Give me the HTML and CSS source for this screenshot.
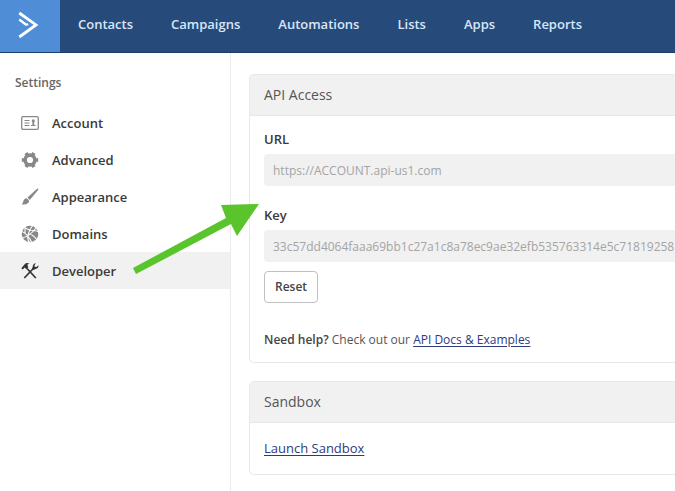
FILE: index.html
```html
<!DOCTYPE html>
<html lang="en">
<head>
<meta charset="utf-8">
<title>Developer Settings</title>
<link rel="stylesheet" href="styles.css">
</head>
<body>
<header class="topbar">
  <a class="logo" href="#" aria-label="Home">
    <svg width="60" height="52" viewBox="0 0 60 52" fill="none" stroke="#fff">
      <path d="M19.3 13L36 24.900L19.300 37" stroke-width="2.800"/>
      <path d="M19.300 19.500L25.500 24.200Q26.700 25 28 24" stroke-width="2.300"/>
    </svg>
  </a>
  <nav class="nav">
    <a href="#">Contacts</a>
    <a href="#">Campaigns</a>
    <a href="#">Automations</a>
    <a href="#">Lists</a>
    <a href="#">Apps</a>
    <a href="#">Reports</a>
  </nav>
</header>
<div class="layout">
  <aside class="sidebar">
    <h2 class="sidebar-title">Settings</h2>
    <nav class="menu">
      <a href="#">
        <svg class="icon" viewBox="0 0 18 18" fill="none" stroke="currentColor">
          <rect x="0.700" y="2.700" width="16.600" height="12.600" rx="1.300" stroke-width="1.300"/>
          <path d="M3.500 6.500h5M3.500 9h5M3.500 11.500h5"/>
          <circle cx="12.300" cy="6.700" r="1.500" fill="currentColor" stroke="none"/>
          <path d="M12.300 7v4" stroke-width="1.800"/>
          <path d="M10 11.500h4.600"/>
        </svg>
        Account
      </a>
      <a href="#">
        <svg class="icon" viewBox="0 0 18 18" fill="none" stroke="currentColor">
          <circle cx="9" cy="9" r="4.900" stroke-width="3.600"/>
          <path d="M5 2l1.200 2.100M13 2l-1.200 2.100M5 16l1.200-2.100M13 16l-1.200-2.100M0.800 9h2.400M14.800 9h2.400" stroke-width="3.600"/>
        </svg>
        Advanced
      </a>
      <a href="#">
        <svg class="icon" viewBox="0 0 18 18" fill="currentColor">
          <path d="M17.300 0.700Q16.500 0.400 15.500 1.200L6.500 9.600L8.700 12L16.700 2.500Q17.600 1.300 17.300 0.700Z"/>
          <path d="M5.700 10.200Q3.400 10.200 2.600 12.500Q2.100 14.800 0.600 16.500Q5.300 17 7.400 14.700Q8.300 13.700 8 12.600Z"/>
        </svg>
        Appearance
      </a>
      <a href="#">
        <svg class="icon" viewBox="0 0 18 18">
          <circle cx="9" cy="9" r="8.300" fill="currentColor"/>
          <path d="M3 1.500Q6 5 12 5.500T18 8M12 0Q8 5 7 10T9 18M0 6Q7 9 11 18M1 13Q8 12 15 3M7 9Q12 9 16 15M4 1L4 8" fill="none" stroke="#fff" stroke-width="1.100"/>
        </svg>
        Domains
      </a>
      <a class="active" href="#" aria-current="page">
        <svg class="icon" viewBox="0 0 18 18" fill="none" stroke="currentColor">
          <path d="M6 6.500L14.800 16" stroke-width="1.700"/>
          <path d="M12.300 6.500L3.300 16" stroke-width="1.700"/>
          <path d="M0.300 6.200L2 4.300L4.300 1.500Q6 0.700 8.400 1.600L6.300 2.700L7.300 5.300L5.300 7.200L3.700 5.600L1.800 7.500Z" fill="currentColor" stroke="none"/>
          <path d="M14.800 1.300Q11.800 1.700 11.800 4.600L11 6.500L12.600 8L14.500 7Q17.600 6.700 17.500 3.300L15.500 5.100L13.700 4.800L13.500 3.200Z" fill="currentColor" stroke="none"/>
        </svg>
        Developer
      </a>
    </nav>
  </aside>
  <main class="content">
    <section class="card">
      <h2 class="card-title">API Access</h2>
      <div class="card-body">
        <label for="url">URL</label>
        <input id="url" type="text" readonly value="https://ACCOUNT.api-us1.com">
        <label class="key-label" for="key">Key</label>
        <input id="key" type="text" readonly value="33c57dd4064faaa69bb1c27a1c8a78ec9ae32efb535763314e5c71819258">
        <button type="button">Reset</button>
        <p class="help"><strong>Need help?</strong> Check out our <a href="#">API Docs &amp; Examples</a></p>
      </div>
    </section>
    <section class="card">
      <h2 class="card-title">Sandbox</h2>
      <div class="card-body sandbox">
        <a href="#">Launch Sandbox</a>
      </div>
    </section>
  </main>
</div>
<svg class="pointer" width="128" height="72" viewBox="0 0 128 72" aria-hidden="true">
  <path d="M1 65L94 15L89 2L127 1L105 33L99 21L4 71Z" fill="#59c42b"/>
</svg>
</body>
</html>
```
FILE: styles.css
```css
* {
  box-sizing: border-box;
}

body {
  display: flex;
  flex-direction: column;
  min-height: 100vh;
  margin: 0;
  background: #fff;
  color: #444;
  font-family: "Open Sans", sans-serif;
  font-size: 13px;
  line-height: 20px;
  overflow-x: hidden;
}

h2,
p {
  margin: 0;
}

.topbar {
  display: flex;
  height: 53px;
  background: #264b7b;
  border-bottom: 1px solid #1d3d69;
}

.logo {
  width: 60px;
  background: #508dd7;
}

.logo svg {
  display: block;
}

.nav {
  display: flex;
  align-items: center;
  gap: 38px;
  padding: 0 18px 4px;
}

.nav a {
  color: #d9e6f7;
  font-weight: 600;
  text-decoration: none;
}

.layout {
  display: flex;
  flex: 1;
}

.sidebar {
  flex: none;
  width: 231px;
  padding-top: 20px;
  border-right: 1px solid #ececec;
}

.sidebar-title {
  padding-left: 15px;
  color: #666;
  font-size: 12px;
  font-weight: 600;
}

.menu {
  display: flex;
  flex-direction: column;
  margin-top: 11px;
}

.menu a {
  display: flex;
  align-items: center;
  gap: 13px;
  height: 37px;
  padding-left: 21px;
  color: #3a3a3a;
  font-weight: 600;
  text-decoration: none;
}

.menu .active {
  background: #f1f1f1;
}

.icon {
  width: 18px;
  height: 18px;
  color: #888;
}

.active .icon {
  color: #333;
}

.content {
  display: flex;
  flex: 1;
  flex-direction: column;
  gap: 18px;
  min-width: 0;
  padding: 21px 0 14px 18px;
}

.card {
  border: 1px solid #e8e8e8;
  border-right: 0;
  border-radius: 5px 0 0 5px;
}

.card-title {
  padding: 10px 14px;
  background: #f1f1f1;
  border-bottom: 1px solid #e8e8e8;
  border-radius: 4px 0 0;
  color: #555;
  font-size: 14px;
  font-weight: 400;
}

.card-body {
  padding: 13px 0 12px 14px;
}

.card-body label {
  display: block;
  margin-bottom: 5px;
  color: #3a3a3a;
  font-weight: 600;
}

.card-body .key-label {
  margin-top: 19px;
}

.card-body input {
  display: block;
  width: 100%;
  height: 32px;
  padding: 0 0 0 9px;
  background: #f1f1f1;
  border: 0;
  border-radius: 4px 0 0 4px;
  color: #a4a4a4;
  font: inherit;
  font-size: 12px;
}

.card-body button {
  display: block;
  height: 32px;
  margin-top: 9px;
  padding: 0 10px;
  background: #fff;
  border: 1px solid #c0c0c0;
  border-radius: 4px;
  color: #444;
  font: inherit;
  font-size: 12px;
  font-weight: 600;
}

.card-body a {
  color: #2c3b80;
  text-underline-offset: 2px;
}

.help {
  margin-top: 27px;
  font-size: 12px;
  color: #555;
}

.help strong {
  color: #444;
  font-weight: 600;
}

.card-body.sandbox {
  padding: 15px 14px 16px;
}

/* Callout arrow laid over the page, pointing at the API credentials. */
.pointer {
  position: absolute;
  top: 203px;
  left: 132px;
}
```
